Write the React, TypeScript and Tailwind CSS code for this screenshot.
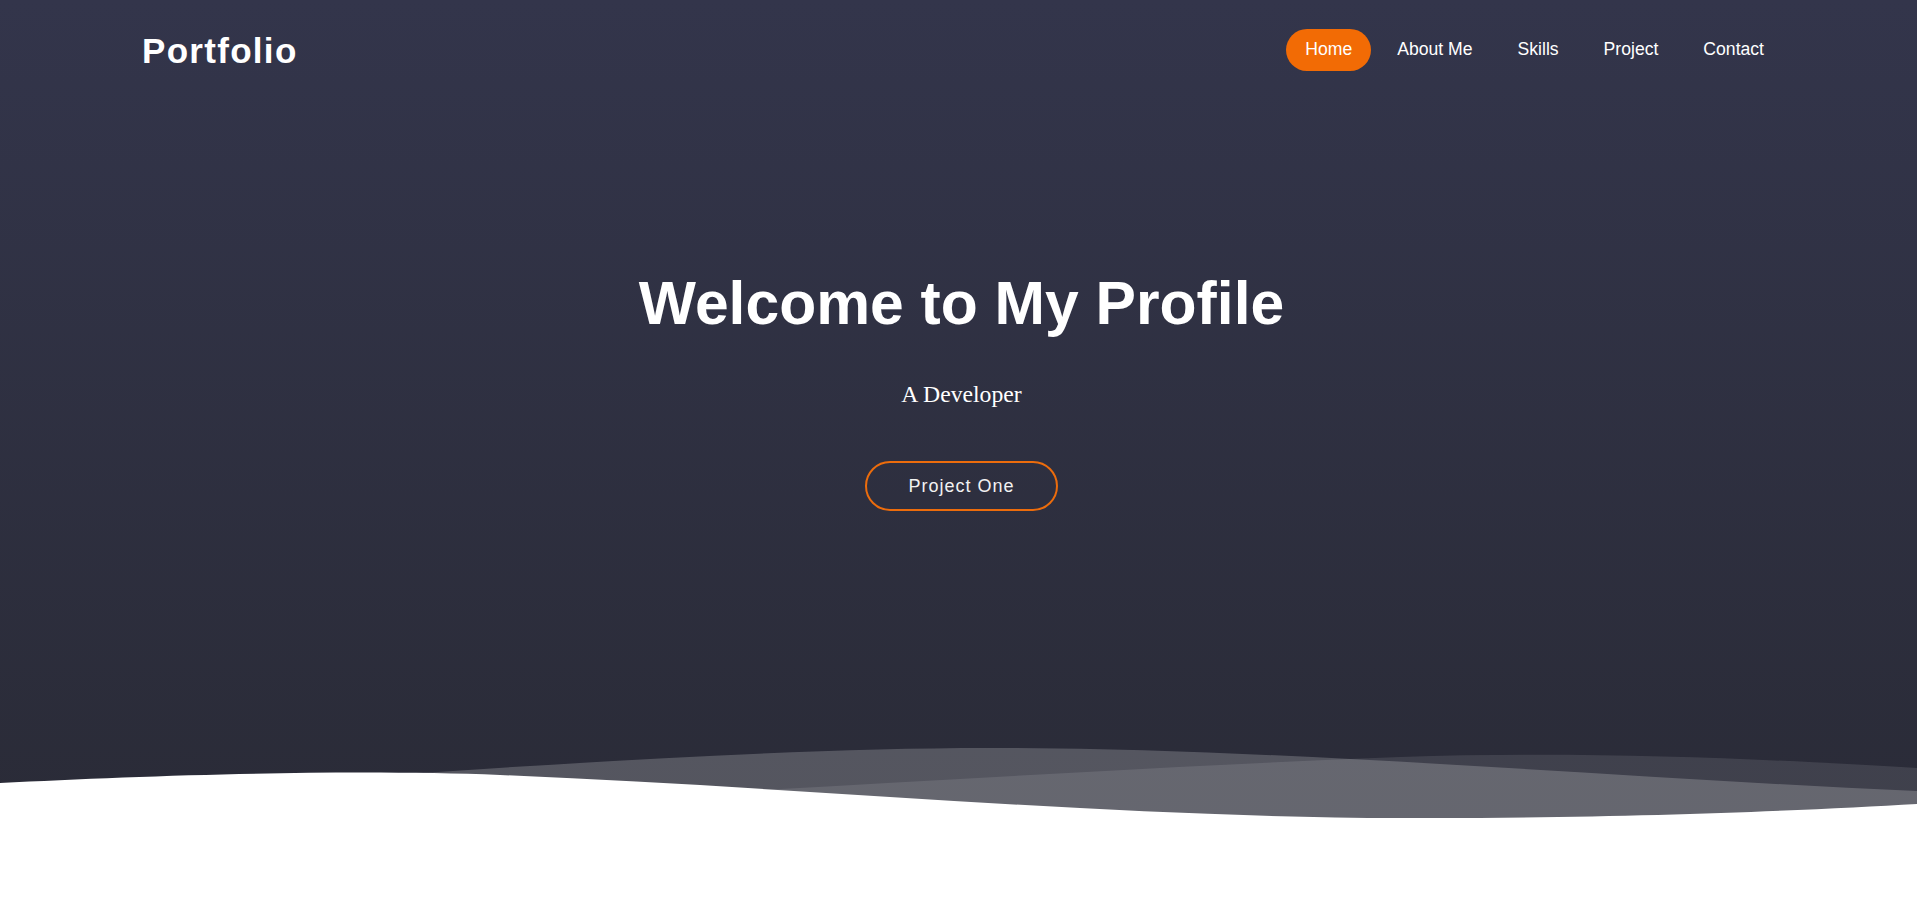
const links = ["Home", "About Me", "Skills", "Project", "Contact"];

export default function App() {
  return (
    <div className="h-screen flex flex-col overflow-hidden bg-linear-to-b from-[#33354b] to-[#292a35] font-['Liberation_Sans',Arial,sans-serif]">
      {/* top bar */}
      <header className="h-[100px] shrink-0 flex items-center justify-between pl-[142px] pr-[134px]">
        <h1 className="text-[35px] leading-none font-bold tracking-[1.3px] text-white">
          Portfolio
        </h1>
        <nav className="flex items-center gap-[7px]">
          {links.map((link, i) => (
            <a
              key={link}
              href="#"
              className={
                i === 0
                  ? "px-[19px] pt-[9px] pb-[11px] rounded-full bg-[#f26b05] text-[17.6px] leading-[22px] text-white"
                  : "px-[19px] pt-[9px] pb-[11px] rounded-full text-[17.6px] leading-[22px] text-white"
              }
            >
              {link}
            </a>
          ))}
        </nav>
      </header>

      {/* hero */}
      <main className="flex-1 flex flex-col items-center pt-[173px] pl-[6px]">
        <h2 className="text-[60.6px] leading-[60px] font-bold text-white">
          Welcome to My Profile
        </h2>
        <p className="mt-[48px] text-[23.7px] leading-[26px] text-white font-['Liberation_Serif','Times_New_Roman',serif]">
          A Developer
        </p>
        <button className="mt-[54px] border-2 border-[#ec6c0c] rounded-full px-[41px] py-[12px] text-[18px] leading-[22px] tracking-[1px] text-[#f2f2f2]">
          Project One
        </button>
      </main>

      {/* waves */}
      <svg
        className="block w-full h-[180px] shrink-0"
        viewBox="0 0 1917 180"
        preserveAspectRatio="none"
      >
        <path
          d="M0,85 C500,75 1000,35 1400,20 C1600,13 1800,24 1917,31 L1917,180 L0,180 Z"
          fill="#ffffff"
          fillOpacity="0.1"
        />
        <path
          d="M0,62 C300,48 700,10 1000,11 C1300,12 1600,40 1917,54 L1917,180 L0,180 Z"
          fill="#ffffff"
          fillOpacity="0.2"
        />
        <path
          d="M0,46 C150,38 350,32 500,38 C800,50 1100,80 1400,81 C1600,82 1800,74 1917,67 L1917,180 L0,180 Z"
          fill="#ffffff"
        />
      </svg>
    </div>
  );
}
